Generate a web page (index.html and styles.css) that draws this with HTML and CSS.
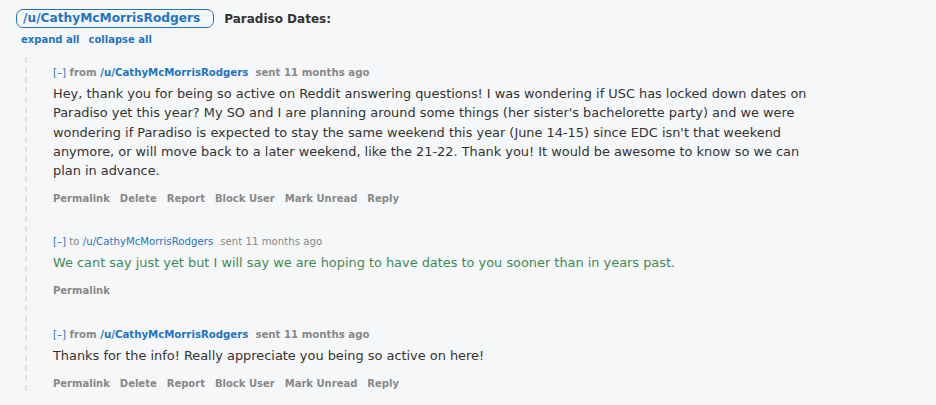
FILE: index.html
```html
<!DOCTYPE html>
<html>
<head>
<meta charset="utf-8">
<link rel="stylesheet" href="styles.css">
</head>
<body>
<div class="page">
  <div class="subject-row">
    <a class="pill">/u/CathyMcMorrisRodgers</a>
    <span class="subject">Paradiso Dates:</span>
  </div>
  <div class="expand-row">
    <a class="tool">expand all</a>
    <a class="tool">collapse all</a>
  </div>
  <div class="thread">
    <div class="message">
      <div class="tagline bold"><span class="toggle">[–]</span> from <a class="author">/u/CathyMcMorrisRodgers</a><span class="time">sent 11 months ago</span></div>
      <div class="md">Hey, thank you for being so active on Reddit answering questions! I was wondering if USC has locked down dates on Paradiso yet this year? My SO and I are planning around some things (her sister's bachelorette party) and we were wondering if Paradiso is expected to stay the same weekend this year (June 14-15) since EDC isn't that weekend anymore, or will move back to a later weekend, like the 21-22. Thank you! It would be awesome to know so we can plan in advance.</div>
      <ul class="buttons">
        <li>Permalink</li><li>Delete</li><li>Report</li><li>Block User</li><li>Mark Unread</li><li>Reply</li>
      </ul>
    </div>
    <div class="message reply">
      <div class="tagline"><span class="toggle">[–]</span> to <a class="author">/u/CathyMcMorrisRodgers</a><span class="time">sent 11 months ago</span></div>
      <div class="md green">We cant say just yet but I will say we are hoping to have dates to you sooner than in years past.</div>
      <ul class="buttons short">
        <li>Permalink</li>
      </ul>
    </div>
    <div class="message">
      <div class="tagline bold"><span class="toggle">[–]</span> from <a class="author">/u/CathyMcMorrisRodgers</a><span class="time">sent 11 months ago</span></div>
      <div class="md">Thanks for the info! Really appreciate you being so active on here!</div>
      <ul class="buttons">
        <li>Permalink</li><li>Delete</li><li>Report</li><li>Block User</li><li>Mark Unread</li><li>Reply</li>
      </ul>
    </div>
  </div>
</div>
</body>
</html>
```
FILE: styles.css
```css
html, body {
  margin: 0;
  padding: 0;
  background: #f6f7f8;
}
body {
  font-family: "DejaVu Sans", Verdana, sans-serif;
  color: #333;
  height: 405px;
  overflow: hidden;
}
.page {
  padding: 9px 0 0 16px;
}
.subject-row {
  display: flex;
  align-items: center;
  gap: 10px;
}
.pill {
  display: inline-block;
  border: 1px solid #1f74c4;
  border-radius: 7px;
  padding: 0 13px 0 6px;
  height: 17px;
  line-height: 17px;
  font-size: 12.2px;
  font-weight: bold;
  color: #1f74c4;
}
.subject {
  font-size: 12px;
  font-weight: bold;
  color: #333;
}
.expand-row {
  display: flex;
  gap: 9px;
  padding-left: 5px;
  margin-top: 5px;
  height: 14px;
  line-height: 14px;
}
.tool {
  font-size: 10px;
  font-weight: bold;
  color: #1f74c4;
}
.thread {
  margin: 10px 0 0 9px;
  border-left: 2px dashed #e0e1e3;
  padding: 9px 0 0 26px;
}
.message {
  margin-bottom: 29px;
}
.message.reply {
  margin-bottom: 30px;
}
.tagline {
  font-size: 10.2px;
  line-height: 14px;
  color: #888;
}
.tagline.bold {
  font-weight: bold;
}
.toggle {
  color: #1f74c4;
  font-weight: normal;
}
.author {
  color: #1f74c4;
}
.time {
  margin-left: 7px;
}
.md {
  font-size: 12.9px;
  line-height: 19.25px;
  max-width: 765px;
  margin-top: 4px;
  color: #333;
}
.md.green {
  color: #3f8a52;
}
.buttons {
  list-style: none;
  margin: 12px 0 0 0;
  padding: 0;
  display: flex;
  gap: 10px;
  font-size: 10px;
  font-weight: bold;
  color: #888;
  line-height: 14px;
}
.buttons.short {
  margin-top: 11px;
}
```
